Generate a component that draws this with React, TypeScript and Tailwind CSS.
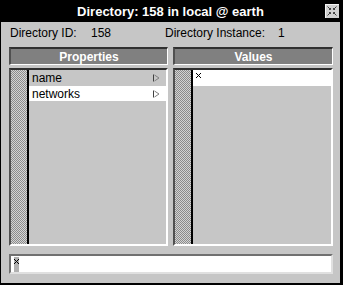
import React from "react";

const Arrow = () => (
  <svg width="7" height="8" viewBox="0 0 7 8" className="block">
    <path d="M0.5 0.5V7.5" stroke="#404040" strokeWidth="1" />
    <path d="M1.5 1L6 4L1.5 7" fill="none" stroke="#808080" strokeWidth="1" />
  </svg>
);

const XMark = () => (
  <svg width="5" height="5" viewBox="0 0 5 5" className="block">
    <path d="M0 0h1v1H0zM4 0h1v1H4zM1 1h1v1H1zM3 1h1v1H3zM2 2h1v1H2zM1 3h1v1H1zM3 3h1v1H3zM0 4h1v1H0zM4 4h1v1H4z" fill="#000" />
  </svg>
);

const CloseIcon = () => (
  <svg width="14" height="14" viewBox="0 0 14 14" className="block">
    <rect x="0" y="0" width="14" height="14" fill="#d0d0d0" />
    <path d="M0 0.5H14M0.5 0V14" stroke="#f4f4f4" strokeWidth="1" />
    <path d="M2.5 2.5L5.5 5.5M11.5 2.5L8.5 5.5M2.5 11.5L5.5 8.5M11.5 11.5L8.5 8.5" stroke="#404040" strokeWidth="1" />
    <path d="M4 5.5H5.5V4M10 5.5H8.5V4M4 8.5H5.5V10M10 8.5H8.5V10" fill="none" stroke="#404040" strokeWidth="1" />
  </svg>
);

export default function App() {
  const font = { fontFamily: '"Liberation Sans", Arial, sans-serif' };
  return (
    <div
      style={font}
      className="w-[343px] h-[285px] bg-[#c6c6c6] border-l border-r-[3px] border-b-2 border-black flex flex-col overflow-hidden"
    >
      <div className="relative h-[22px] bg-black flex items-center justify-center text-white font-bold text-[13px] leading-none">
        <span>Directory: 158 in local @ earth</span>
        <div className="absolute right-[1px] top-[4px]">
          <CloseIcon />
        </div>
      </div>

      <div className="flex-1 flex flex-col pl-[8px] pr-[7px]">
        <div className="h-[14px] mt-[4px] flex items-center text-[12px] leading-none text-black">
          <span className="ml-[1px] w-[81px]">Directory ID:</span>
          <span className="w-[74px]">158</span>
          <span className="w-[113px]">Directory Instance:</span>
          <span>1</span>
        </div>

        <div className="mt-[7px] flex gap-[5px]">
          {/* Properties column */}
          <div className="w-[159px] flex flex-col">
            <div className="h-[18px] bg-[#808080] border-t-2 border-l-2 border-t-[#303030] border-l-[#505050] border-b border-r border-b-white border-r-white flex items-center justify-center text-white font-bold text-[12px] leading-none">
              Properties
            </div>
            <div className="mt-[3px] h-[178px] flex border-t-2 border-l-2 border-t-[#303030] border-l-[#505050] border-b-2 border-r-2 border-b-white border-r-white">
              <div className="w-[18px] bg-[conic-gradient(#8c8c8c_25%,#d4d4d4_0_50%,#8c8c8c_0_75%,#d4d4d4_0)] bg-[length:2px_2px] border-r-2 border-black" />
              <div className="flex-1 flex flex-col text-[12px] leading-none text-black">
                <div className="h-[16px] flex items-center pl-[3px] pr-[6px]">
                  <span className="flex-1">name</span>
                  <Arrow />
                </div>
                <div className="h-[15px] flex items-center pl-[3px] pr-[6px] bg-white">
                  <span className="flex-1">networks</span>
                  <Arrow />
                </div>
              </div>
            </div>
          </div>

          {/* Values column */}
          <div className="w-[160px] flex flex-col">
            <div className="h-[18px] bg-[#808080] border-t-2 border-l-2 border-t-[#303030] border-l-[#505050] border-b border-r border-b-white border-r-white flex items-center justify-center text-white font-bold text-[12px] leading-none">
              Values
            </div>
            <div className="mt-[3px] h-[178px] flex border-t-2 border-l-2 border-t-[#303030] border-l-[#505050] border-b-2 border-r-2 border-b-white border-r-white">
              <div className="w-[18px] bg-[conic-gradient(#8c8c8c_25%,#d4d4d4_0_50%,#8c8c8c_0_75%,#d4d4d4_0)] bg-[length:2px_2px] border-r-2 border-black" />
              <div className="flex-1 flex flex-col">
                <div className="h-[16px] bg-white pl-[3px] pt-[3px]">
                  <XMark />
                </div>
              </div>
            </div>
          </div>
        </div>

        <div className="mt-[8px] w-[324px] h-[20px] bg-white border-t-2 border-l-2 border-t-[#707070] border-l-[#707070] border-b-2 border-r-2 border-b-[#e0e0e0] border-r-[#e0e0e0] pl-[3px] pt-[1px]">
          <div className="w-[5px] h-[15px] bg-[#b0b0b0] pt-[2px]">
            <XMark />
          </div>
        </div>
      </div>
    </div>
  );
}
